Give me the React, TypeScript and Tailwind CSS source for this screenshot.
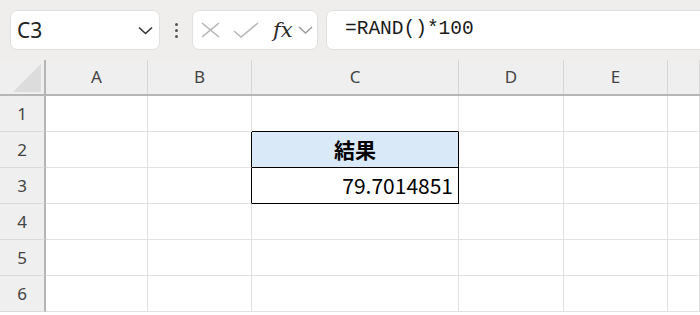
import React from "react";

const cols = [
  { key: "A", w: "w-[102px]" },
  { key: "B", w: "w-[104px]" },
  { key: "C", w: "w-[207px]" },
  { key: "D", w: "w-[105px]" },
  { key: "E", w: "w-[104px]" },
  { key: "F", w: "flex-1" },
];

const rows = [1, 2, 3, 4, 5, 6];

// cells that form the small result table (C2:C3)
const cellClass = (r: number, c: string) => {
  let cls = "border-r border-b border-[#e1e1e1]";
  if (c === "B" && (r === 2 || r === 3)) cls = "border-r border-b border-b-[#e1e1e1] border-r-black";
  if (c === "C" && r === 1) cls = "border-r border-b border-r-[#e1e1e1] border-b-black";
  if (c === "C" && r === 2) cls = "border-r border-b border-black bg-[#dae9f8]";
  if (c === "C" && r === 3) cls = "border-r border-b border-black";
  return cls;
};

const cellText = (r: number, c: string) => {
  if (c === "C" && r === 2)
    return <span className="w-full text-center font-bold text-[21px] text-black">結果</span>;
  if (c === "C" && r === 3)
    return <span className="w-full text-right pr-[5px] text-[21px] text-black">79.7014851</span>;
  return null;
};

const App: React.FC = () => {
  return (
    <div
      className="w-[700px] h-[315px] overflow-hidden bg-white flex flex-col"
      style={{ fontFamily: '"Noto Sans", "Noto Sans CJK JP", sans-serif' }}
    >
      {/* ツールバー */}
      <div className="h-[60px] shrink-0 bg-[#efeeec] flex items-start pt-[10px] pl-[10px]">
        <div className="w-[150px] h-[40px] shrink-0 bg-white rounded-[7px] border border-[#e0dfdd] flex items-center justify-between pl-[6px] pr-[6px]">
          <span className="text-[21px] text-[#222] leading-none">C3</span>
          <svg width="15" height="9" viewBox="0 0 15 9" fill="none">
            <path d="M1 1.5 L7.5 7.5 L14 1.5" stroke="#333" strokeWidth="1.6" />
          </svg>
        </div>
        <div className="w-[32px] h-[40px] shrink-0 flex flex-col items-center justify-center gap-[3px]">
          <div className="w-[3px] h-[3px] rounded-full bg-[#555]" />
          <div className="w-[3px] h-[3px] rounded-full bg-[#555]" />
          <div className="w-[3px] h-[3px] rounded-full bg-[#555]" />
        </div>
        <div className="w-[126px] h-[40px] shrink-0 bg-white rounded-[7px] border border-[#e0dfdd] flex items-center pl-[8px]">
          <svg width="19" height="16" viewBox="0 0 19 16" fill="none">
            <path d="M1 1 L18 15 M18 1 L1 15" stroke="#b3b3b3" strokeWidth="1.5" />
          </svg>
          <svg width="26" height="16" viewBox="0 0 26 16" fill="none" className="ml-[13px]">
            <path d="M1 9 L8 15 L25 1" stroke="#b8b8b8" strokeWidth="1.6" />
          </svg>
          <span
            className="ml-[14px] italic text-[21px] text-[#2a2a2a] leading-none"
            style={{ fontFamily: '"DejaVu Serif", "Liberation Serif", serif' }}
          >
            fx
          </span>
          <svg width="15" height="8" viewBox="0 0 15 8" fill="none" className="ml-[5px]">
            <path d="M1 1 L7.5 7 L14 1" stroke="#9a9a9a" strokeWidth="1.4" />
          </svg>
        </div>
        <div className="w-[390px] h-[40px] shrink-0 ml-[8px] bg-white rounded-[7px] border border-[#e0dfdd] flex items-center pl-[18px]">
          <span
            className="text-[19.5px] text-[#1a1a1a] leading-none"
            style={{ fontFamily: '"Liberation Mono", "DejaVu Sans Mono", monospace' }}
          >
            =RAND()*100
          </span>
        </div>
      </div>

      {/* 列見出し */}
      <div className="h-[36px] shrink-0 flex bg-[#efefef] border-b-2 border-[#b5b5b5]">
        <div className="w-[46px] shrink-0 border-r-2 border-[#b5b5b5] flex items-end justify-end pr-[3px] pb-[2px]">
          <svg width="28" height="28" viewBox="0 0 28 28">
            <polygon points="0,28 28,0 28,28" fill="#dcdcdc" />
          </svg>
        </div>
        {cols.map((c) => (
          <div
            key={c.key}
            className={`${c.w} shrink-0 border-r border-[#d6d6d6] flex items-center justify-center text-[17px] text-[#444]`}
          >
            {c.key !== "F" ? c.key : ""}
          </div>
        ))}
      </div>

      {/* 行 */}
      {rows.map((r) => (
        <div key={r} className="h-[36px] shrink-0 flex">
          <div className="w-[46px] shrink-0 bg-[#efefef] border-r-2 border-r-[#b5b5b5] border-b border-b-[#dadada] flex items-center justify-center text-[17px] text-[#444]">
            {r}
          </div>
          {cols.map((c) => (
            <div
              key={c.key}
              className={`${c.w} shrink-0 flex items-center ${cellClass(r, c.key)}`}
              style={{ fontFamily: '"Noto Sans CJK JP", "Noto Sans", sans-serif' }}
            >
              {cellText(r, c.key)}
            </div>
          ))}
        </div>
      ))}
    </div>
  );
};

export default App;
